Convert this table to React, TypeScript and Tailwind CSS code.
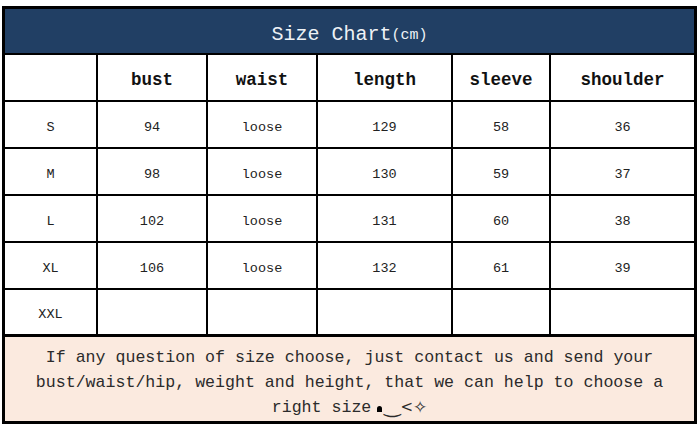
import React from "react";

const cols = ["", "bust", "waist", "length", "sleeve", "shoulder"];
const rows = [
  ["S", "94", "loose", "129", "58", "36"],
  ["M", "98", "loose", "130", "59", "37"],
  ["L", "102", "loose", "131", "60", "38"],
  ["XL", "106", "loose", "132", "61", "39"],
  ["XXL", "", "", "", "", ""],
];

const mono = { fontFamily: '"Liberation Mono", "DejaVu Sans Mono", monospace' };
const dv = { fontFamily: '"DejaVu Sans", sans-serif' };

export default function App() {
  return (
    <div className="w-[700px] h-[428px] bg-white overflow-hidden" style={mono}>
      <div className="ml-[2px] mt-[6px] w-[695px] border-[3px] border-black">
        <div className="h-[46px] pt-[8px] bg-[#213f64] border-b-2 border-black flex items-center justify-center text-[#eef2f6]">
          <span className="text-[20px] leading-none">Size Chart</span>
          <span className="text-[15px] leading-none">(cm)</span>
        </div>
        <div className="grid grid-cols-[91px_108px_108px_133px_96px_143px] grid-rows-[45px_45px_45px_45px_45px_44px] gap-[2px] bg-black">
          {cols.map((c, i) => (
            <div key={"h" + i} className="bg-white flex items-center justify-center text-[17.5px] font-bold text-[#111] pt-[6px]">
              {c}
            </div>
          ))}
          {rows.map((r, ri) =>
            r.map((v, ci) => (
              <div key={ri + "-" + ci} className="bg-white flex items-center justify-center text-[13.5px] text-[#222] pt-[7px]">
                {v}
              </div>
            ))
          )}
        </div>
        <div className="h-[87px] border-t-[3px] border-black bg-[#fbeadf] flex flex-col items-center justify-center text-[16.6px] leading-[25px] text-[#2b2b2b] pt-[7px]">
          <div className="whitespace-pre">If any question of size choose, just contact us and send your</div>
          <div className="whitespace-pre">bust/waist/hip, weight and height, that we can help to choose a</div>
          <div className="whitespace-pre flex items-center h-[25px]">
            <span>right size</span>
            <span className="inline-block w-[5px] h-[6px] bg-black rounded-t-[3px] ml-[6px] mt-[2px]"></span>
            <span className="text-[20px] leading-[20px] ml-[2px] relative top-[-2px]" style={dv}>‿</span>
            <span className="text-[15px] leading-none" style={dv}>&lt;</span>
            <span className="text-[17px] leading-none" style={dv}>✧</span>
          </div>
        </div>
      </div>
    </div>
  );
}
